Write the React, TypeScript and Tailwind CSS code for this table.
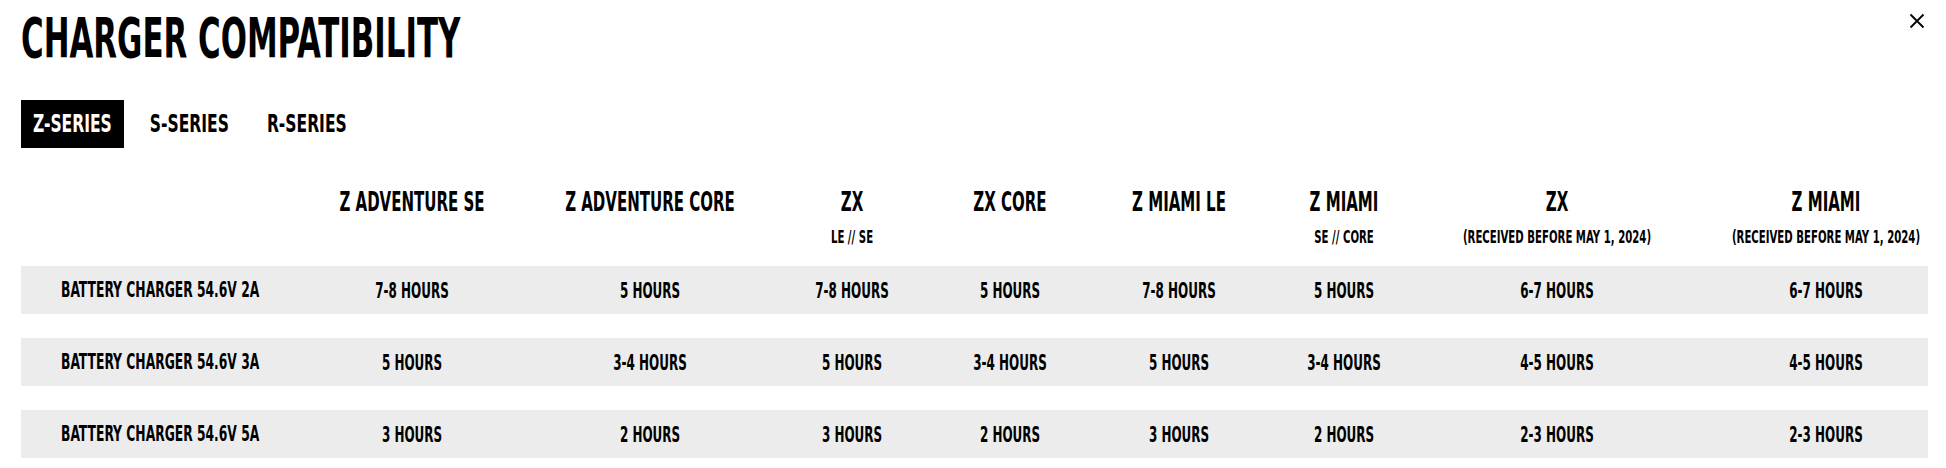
import { useState } from "react";

const cols = [
  { name: "Z ADVENTURE SE", sub: "" },
  { name: "Z ADVENTURE CORE", sub: "" },
  { name: "ZX", sub: "LE // SE" },
  { name: "ZX CORE", sub: "" },
  { name: "Z MIAMI LE", sub: "" },
  { name: "Z MIAMI", sub: "SE // CORE" },
  { name: "ZX", sub: "(RECEIVED BEFORE MAY 1, 2024)" },
  { name: "Z MIAMI", sub: "(RECEIVED BEFORE MAY 1, 2024)" },
];

const rows = [
  { label: "BATTERY CHARGER 54.6V 2A", vals: ["7-8 HOURS", "5 HOURS", "7-8 HOURS", "5 HOURS", "7-8 HOURS", "5 HOURS", "6-7 HOURS", "6-7 HOURS"] },
  { label: "BATTERY CHARGER 54.6V 3A", vals: ["5 HOURS", "3-4 HOURS", "5 HOURS", "3-4 HOURS", "5 HOURS", "3-4 HOURS", "4-5 HOURS", "4-5 HOURS"] },
  { label: "BATTERY CHARGER 54.6V 5A", vals: ["3 HOURS", "2 HOURS", "3 HOURS", "2 HOURS", "3 HOURS", "2 HOURS", "2-3 HOURS", "2-3 HOURS"] },
];

const tabs = ["Z-SERIES", "S-SERIES", "R-SERIES"];

const grid = "grid grid-cols-[247px_288px_188px_216px_100px_238px_92px_334px_204px]";

export default function App() {
  const [tab, setTab] = useState(0);

  return (
    <div className="relative w-[1946px] h-[468px] bg-white text-black font-['Liberation_Sans_Narrow','DejaVu_Sans_Condensed',sans-serif] font-bold overflow-hidden">
      {/* close */}
      <button className="absolute top-[13px] left-[1909px] w-[16px] h-[16px]">
        <svg width="16" height="16" viewBox="0 0 16 16" fill="none" stroke="#000" strokeWidth="1.8">
          <path d="M1.5 1.5 L14.5 14.5 M14.5 1.5 L1.5 14.5" />
        </svg>
      </button>

      <div className="pl-[21px] pr-[18px] pt-[18px]">
        <h1 className="h-[40px] flex items-center">
          <span className="inline-block text-[34.3px] leading-none scale-y-[1.6] origin-center whitespace-nowrap">
            CHARGER COMPATIBILITY
          </span>
        </h1>

        <div className="mt-[42px] flex gap-[14px]">
          {tabs.map((t, i) => (
            <button
              key={t}
              onClick={() => setTab(i)}
              className={`h-[48px] px-[12px] flex items-center ${i === tab ? "bg-black text-white" : "bg-white text-black"}`}
            >
              <span className="inline-block text-[17.3px] leading-none scale-y-[1.47]">{t}</span>
            </button>
          ))}
        </div>

        <div className={`${grid} h-[118px] items-start`}>
          <div />
          {cols.map((c, i) => (
            <div key={i} className="flex flex-col items-center pt-[44px]">
              <div className="h-[21px] flex items-center">
                <span className="inline-block text-[16.7px] leading-none scale-y-[1.6] whitespace-nowrap">{c.name}</span>
              </div>
              {c.sub && (
                <div className="mt-[19px] h-[12px] flex items-center">
                  <span className="inline-block text-[11.3px] leading-none scale-y-[1.52] whitespace-nowrap">{c.sub}</span>
                </div>
              )}
            </div>
          ))}
        </div>

        <div className="flex flex-col gap-[24px]">
          {rows.map((r) => (
            <div key={r.label} className={`${grid} h-[48px] bg-[#ececec] items-center`}>
              <div className="pl-[40px]">
                <span className="inline-block text-[13.7px] leading-none scale-y-[1.6] whitespace-nowrap">{r.label}</span>
              </div>
              {r.vals.map((v, i) => (
                <div key={i} className="text-center">
                  <span className="inline-block text-[13.3px] leading-none scale-y-[1.65] whitespace-nowrap">{v}</span>
                </div>
              ))}
            </div>
          ))}
        </div>
      </div>
    </div>
  );
}
